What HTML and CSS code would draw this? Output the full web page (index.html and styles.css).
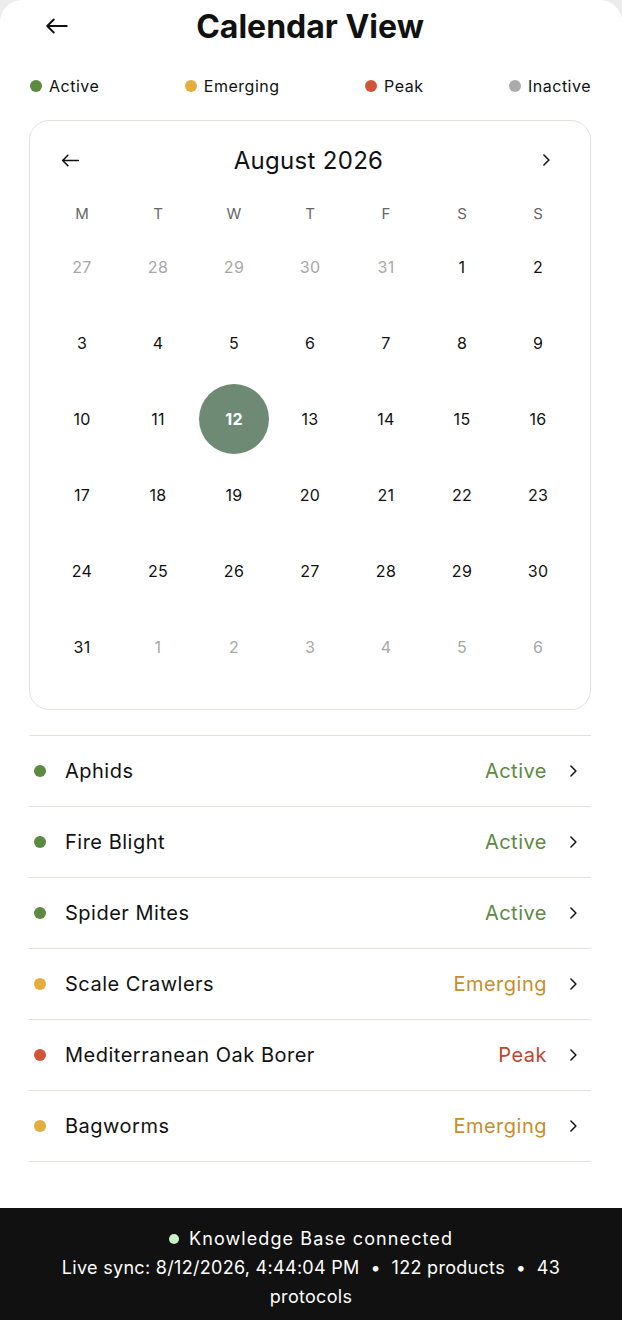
FILE: index.html
```html
<!DOCTYPE html>
<html lang="en">
<head>
  <meta charset="UTF-8">
  <meta name="viewport" content="width=device-width, initial-scale=1.0">
  <title>Calendar View</title>
  <link rel="stylesheet" href="styles.css">
</head>
<body>
  <div class="sheet">
    <header class="topbar">
      <button class="icon-btn back" aria-label="Back">
        <svg width="26" height="26" viewBox="0 0 24 24"><path d="M21 12H3M9 18l-6-6 6-6"/></svg>
      </button>
      <h1>Calendar View</h1>
      <span></span>
    </header>

    <!-- Leyenda -->
    <div class="legend">
      <span class="legend-item"><i class="dot active"></i>Active</span>
      <span class="legend-item"><i class="dot emerging"></i>Emerging</span>
      <span class="legend-item"><i class="dot peak"></i>Peak</span>
      <span class="legend-item"><i class="dot inactive"></i>Inactive</span>
    </div>

    <!-- Calendario -->
    <div class="calendar">
      <div class="cal-head">
        <button class="icon-btn" aria-label="Previous month">
          <svg width="21" height="21" viewBox="0 0 24 24"><path d="M21 12H3M9 18l-6-6 6-6"/></svg>
        </button>
        <h2>August 2026</h2>
        <button class="icon-btn" aria-label="Next month">
          <svg width="20" height="20" viewBox="0 0 24 24"><path d="M9.5 6l6 6-6 6"/></svg>
        </button>
      </div>
      <div class="weekdays">
        <span>M</span><span>T</span><span>W</span><span>T</span><span>F</span><span>S</span><span>S</span>
      </div>
      <div class="days">
        <span class="muted">27</span><span class="muted">28</span><span class="muted">29</span><span class="muted">30</span><span class="muted">31</span><span>1</span><span>2</span>
        <span>3</span><span>4</span><span>5</span><span>6</span><span>7</span><span>8</span><span>9</span>
        <span>10</span><span>11</span><span class="selected"><b>12</b></span><span>13</span><span>14</span><span>15</span><span>16</span>
        <span>17</span><span>18</span><span>19</span><span>20</span><span>21</span><span>22</span><span>23</span>
        <span>24</span><span>25</span><span>26</span><span>27</span><span>28</span><span>29</span><span>30</span>
        <span>31</span><span class="muted">1</span><span class="muted">2</span><span class="muted">3</span><span class="muted">4</span><span class="muted">5</span><span class="muted">6</span>
      </div>
    </div>

    <!-- Lista de plagas -->
    <ul class="pests">
      <li><i class="dot active"></i><span class="name">Aphids</span><span class="status active">Active</span><svg class="chev" width="20" height="20" viewBox="0 0 24 24"><path d="M9.5 6l6 6-6 6"/></svg></li>
      <li><i class="dot active"></i><span class="name">Fire Blight</span><span class="status active">Active</span><svg class="chev" width="20" height="20" viewBox="0 0 24 24"><path d="M9.5 6l6 6-6 6"/></svg></li>
      <li><i class="dot active"></i><span class="name">Spider Mites</span><span class="status active">Active</span><svg class="chev" width="20" height="20" viewBox="0 0 24 24"><path d="M9.5 6l6 6-6 6"/></svg></li>
      <li><i class="dot emerging"></i><span class="name">Scale Crawlers</span><span class="status emerging">Emerging</span><svg class="chev" width="20" height="20" viewBox="0 0 24 24"><path d="M9.5 6l6 6-6 6"/></svg></li>
      <li><i class="dot peak"></i><span class="name">Mediterranean Oak Borer</span><span class="status peak">Peak</span><svg class="chev" width="20" height="20" viewBox="0 0 24 24"><path d="M9.5 6l6 6-6 6"/></svg></li>
      <li><i class="dot emerging"></i><span class="name">Bagworms</span><span class="status emerging">Emerging</span><svg class="chev" width="20" height="20" viewBox="0 0 24 24"><path d="M9.5 6l6 6-6 6"/></svg></li>
    </ul>
  </div>

  <footer class="kb-footer">
    <p class="kb-status"><i class="live-dot"></i>Knowledge Base connected</p>
    <p class="kb-sync">Live sync: 8/12/2026, 4:44:04 PM &nbsp;•&nbsp; 122 products &nbsp;•&nbsp; 43 protocols</p>
  </footer>
</body>
</html>
```

FILE: styles.css
```css
:root {
  --text: #111111;
  --muted: #a8a8a8;
  --line: #e2e2dc;
  --green: #5c8a41;
  --yellow: #e5ad3d;
  --red: #cf5638;
  --gray: #aaaaaa;
  --selected: #6f8a74;
}
* { box-sizing: border-box; margin: 0; padding: 0; }
body {
  font-family: "Inter", "Liberation Sans", sans-serif;
  background-color: #ececec;
  color: var(--text);
}
.sheet {
  background: #fff;
  border-radius: 22px 22px 0 0;
  padding: 0 31px 46px 29px;
}
.icon-btn {
  border: none;
  background: none;
  display: flex;
  align-items: center;
  justify-content: center;
  cursor: pointer;
}
svg path {
  fill: none;
  stroke: var(--text);
  stroke-width: 1.8;
  stroke-linecap: round;
  stroke-linejoin: round;
}
.topbar {
  height: 52px;
  display: grid;
  grid-template-columns: 1fr auto 1fr;
  align-items: center;
}
.topbar .back { justify-self: start; margin-left: 15px; }
.topbar h1 {
  font-size: 32px;
  font-weight: 700;
}
.legend {
  margin: 24px 0;
  height: 20px;
  display: flex;
  justify-content: space-between;
  align-items: center;
  padding-left: 1px;
}
.legend-item {
  display: flex;
  align-items: center;
  gap: 7px;
  font-size: 16px;
  letter-spacing: 0.5px;
}
.dot {
  width: 12px;
  height: 12px;
  border-radius: 50%;
  display: inline-block;
  flex-shrink: 0;
}
.dot.active { background: var(--green); }
.dot.emerging { background: var(--yellow); }
.dot.peak { background: var(--red); }
.dot.inactive { background: var(--gray); }

.calendar {
  border: 1px solid var(--line);
  border-radius: 20px;
  padding: 23px 14px 24px;
}
.cal-head {
  height: 32px;
  display: flex;
  justify-content: space-between;
  align-items: center;
  padding: 0 20px 0 16px;
}
.cal-head h2 {
  font-size: 24px;
  font-weight: 400;
  letter-spacing: 0.3px;
}
.weekdays, .days {
  display: grid;
  grid-template-columns: repeat(7, 1fr);
}
.weekdays {
  margin-top: 21px;
  height: 32px;
  align-items: center;
  text-align: center;
  font-size: 15px;
  color: #666;
}
.days span {
  height: 76px;
  display: flex;
  align-items: center;
  justify-content: center;
  font-size: 16px;
  letter-spacing: 0.3px;
}
.days .muted { color: var(--muted); }
.days .selected b {
  width: 70px;
  height: 70px;
  border-radius: 50%;
  background: var(--selected);
  color: #fff;
  display: flex;
  align-items: center;
  justify-content: center;
  font-weight: 700;
}

.pests {
  list-style: none;
  margin-top: 25px;
  border-top: 1px solid var(--line);
}
.pests li {
  height: 71px;
  border-bottom: 1px solid var(--line);
  display: flex;
  align-items: center;
  padding: 0 8px 0 5px;
  font-size: 20px;
  letter-spacing: 0.5px;
}
.pests .name {
  flex: 1;
  margin-left: 19px;
}
.pests .status { margin-right: 16px; }
.status.active { color: var(--green); }
.status.emerging { color: #c78e2c; }
.status.peak { color: #c3432e; }

.kb-footer {
  background: #111;
  color: #fff;
  text-align: center;
  padding: 16px 40px 20px;
  font-size: 18px;
  line-height: 29px;
}
.kb-status { letter-spacing: 1.1px; }
.kb-sync { letter-spacing: 0.3px; }
.live-dot {
  display: inline-block;
  width: 10px;
  height: 10px;
  border-radius: 50%;
  background: #c9f2c6;
  margin-right: 10px;
  vertical-align: 1px;
}
```
